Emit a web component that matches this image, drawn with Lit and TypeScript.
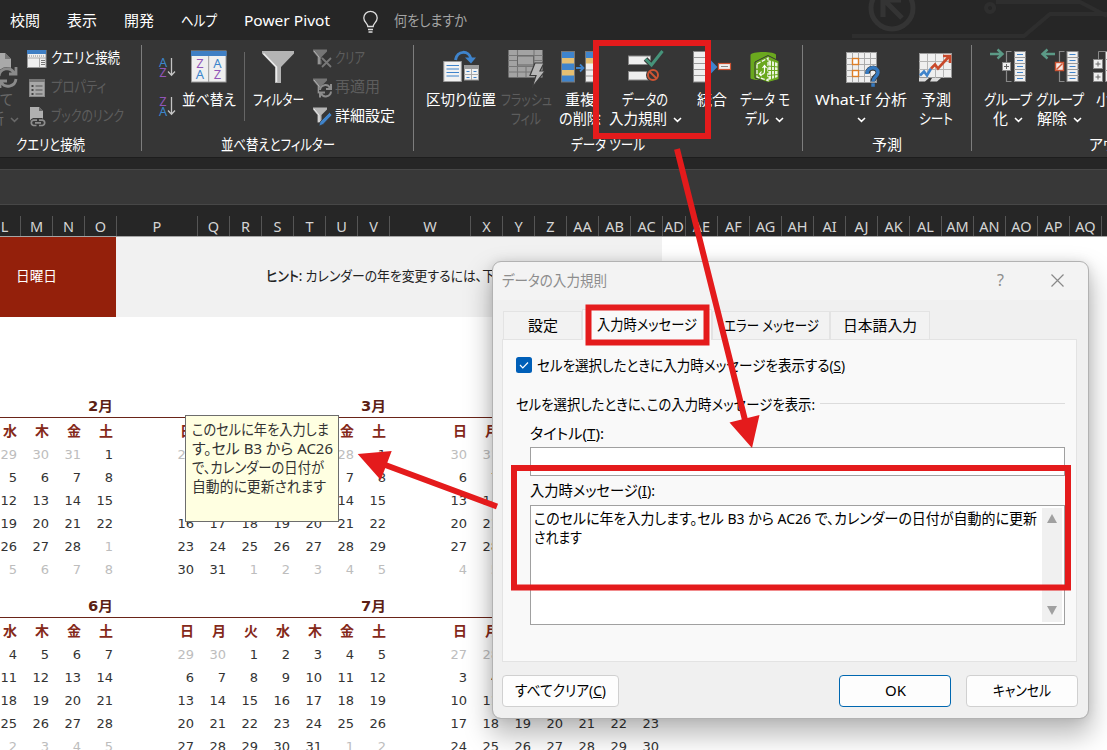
import { LitElement, html, svg, css } from "lit";
import { customElement, property, query } from "lit/decorators.js";

/** A single line of text condensed or widened to an exact width. */
@customElement("fit-text")
class FitText extends LitElement {
  @property({ type: Number }) w = 0;
  @query("span") span!: HTMLSpanElement;
  static styles = css`
    :host { display: inline-block; white-space: nowrap; text-align: left; }
    span { display: inline-block; transform-origin: 0 50%; }
  `;
  updated() {
    this.span.style.transform = "none";
    const natural = this.span.getBoundingClientRect().width;
    if (!natural || !this.w) return;
    this.style.width = `${this.w}px`;
    this.span.style.transform = `translateY(-1px) scaleX(${this.w / natural})`;
  }
  render() { return html`<span><slot></slot></span>`; }
}

const t = (text: unknown, w: number) => html`<fit-text .w=${w}>${text}</fit-text>`;
const chev = html`<svg class="chev" width="9" height="6" viewBox="0 0 9 6"><path d="M1 1l3.5 3.4L8 1" fill="none" stroke="currentColor" stroke-width="1.5"/></svg>`;
const i36 = (c: unknown) => html`<svg class="i36" width="36" height="36" viewBox="0 0 36 36">${c}</svg>`;
const i20 = (c: unknown) => html`<svg class="i20" width="20" height="20" viewBox="0 0 20 20">${c}</svg>`;

const sortIcon = (a: string, b: string, ca: string, cb: string) => html`
  <svg width="20" height="22" viewBox="0 0 20 22">
    <g font-family="Noto Sans" font-size="12.800" text-anchor="middle">
      <text x="5" y="10" fill=${ca}>${a}</text><text x="5" y="20" fill=${cb}>${b}</text></g>
    <path d="M13.500 1v17M10 14.500l3.500 3.700 3.500-3.700" fill="none" stroke="#c4c4c4" stroke-width="1.300"/>
  </svg>`;
const BLUE = "#3c86cc", PURPLE = "#9155b8";

const icons = {
  sort: i36(svg`<rect x="0.500" y="1" width="34.500" height="31" fill="#efefef" stroke="#9a9a9a"/>
    <rect x="0" y="1" width="35.500" height="5" fill="#3f7fc4"/><path d="M17.700 6v26" stroke="#999"/>
    <g font-family="Noto Sans" font-size="13" text-anchor="middle">
    <text x="9" y="17.500" fill=${PURPLE}>Z</text><text x="9" y="28.500" fill=${BLUE}>A</text>
    <text x="26.500" y="17.500" fill=${BLUE}>A</text><text x="26.500" y="28.500" fill=${PURPLE}>Z</text></g>`),
  filter: i36(svg`<path d="M2 1h32v2.500L21 17v16h-6V17L2 3.500z" fill="#b4b4b4"/>
    <path d="M3.500 3.500L16.500 17v15" fill="none" stroke="#ececec" stroke-width="1.500"/>`),
  split: i36(svg`<path d="M12.500 10C14 0 26 0 28 9" fill="none" stroke="#3f84cc" stroke-width="3"/>
    <path d="M22 7.500h11l-5 6z" fill="#3f84cc"/>
    <rect x="0.800" y="11.500" width="17.500" height="20" fill="#f2f2f2" stroke="#9a9a9a"/>
    <path d="M3.500 15.500h12.500M3.500 19h12.500M3.500 22.500h12.500M3.500 26h12.500" stroke="#3f84cc" stroke-width="1.200"/>
    <rect x="21.500" y="15.500" width="14" height="14.500" fill="#f2f2f2" stroke="#9a9a9a"/><rect x="21" y="15" width="15" height="4" fill="#9a9a9a"/>
    <path d="M28.500 19v11M21 24.500h15" stroke="#aaa"/><path d="M23.500 21.500h3M30.500 21.500h3M23.500 27.500h3M30.500 27.500h3" stroke="#3f84cc"/>`),
  flash: i36(svg`<rect x="0.500" y="0" width="34" height="27.500" fill="#a3a3a3"/>
    <path d="M0 5.500h35M0 10.500h35M0 16.500h35M0 22h35M9.500 0v5.500M9.500 10v17M26 0v17M18 16v11" stroke="#777" stroke-width="1.100"/>
    <rect x="9.500" y="6" width="16" height="9" fill="#a3a3a3" stroke="#666"/>
    <path d="M27 13h9l-4 8h5L24 37.500l4-12h-6z" fill="#b8b8b8" stroke="#3a3a3a" stroke-width="1.200"/>`),
  dup: i36(svg`<rect x="-0.500" y="1.500" width="13" height="30.500" fill="#3f84cc" stroke="#777"/>
    <rect x="0" y="8" width="12" height="5.500" fill="#e5bf72"/><rect x="0" y="20" width="12" height="5.500" fill="#e5bf72"/>
    <path d="M14 18h7M18 14.500l3.500 3.500-3.500 3.500" fill="none" stroke="#3f84cc" stroke-width="1.800"/>
    <rect x="23.500" y="1.500" width="12" height="30.500" fill="#efefef" stroke="#777"/>
    <rect x="24" y="2" width="12" height="6" fill="#3f84cc"/><rect x="24" y="8" width="12" height="5.500" fill="#e5bf72"/>
    <path d="M24 20h12M24 26h12" stroke="#999"/>`),
  valid: i36(svg`<rect x="1.500" y="6" width="22" height="8.500" fill="#efefef" stroke="#888"/>
    <rect x="1.500" y="21.500" width="22" height="8.500" fill="#efefef" stroke="#888"/>
    <path d="M18.500 9l6 6L35.500 1" fill="none" stroke="#363636" stroke-width="5"/>
    <path d="M18.500 9l6 6L35.500 1" fill="none" stroke="#46937a" stroke-width="3"/>
    <circle cx="26" cy="25" r="7" fill="#363636"/><circle cx="26" cy="25" r="5" fill="none" stroke="#cd5434" stroke-width="2"/><path d="M22.500 21.500l7 7" stroke="#cd5434" stroke-width="2"/>`),
  cons: i36(svg`<rect x="-0.500" y="1.500" width="14" height="30.500" fill="#efefef" stroke="#888"/>
    <path d="M0 7.500h13M0 13.500h13M0 19.500h13M0 25.500h13" stroke="#999"/>
    <path d="M14 17h5M18 13l4 4-4 4z" stroke="#3f84cc" stroke-width="2" fill="#3f84cc"/>
    <rect x="24.500" y="13.500" width="12" height="6" fill="#efefef" stroke="#cd5434" stroke-width="1.200"/><path d="M27 16.500h7" stroke="#888"/>`),
  model: i36(svg`<path d="M3.500 5C3.500 1 29 1 29 5V28C29 31 3.500 31 3.500 28z" fill="#6aa81e"/>
    <path d="M8 12l13-6.500L32 11v18.500L21 32.500 8 28z" fill="#6aa81e" stroke="#363636" stroke-width="1"/>
    <path d="M10 14l11-6v22.500L10 27z" fill="none" stroke="#f4f4f4" stroke-width="1.300" stroke-dasharray="4 1.500"/>
    <path d="M21.500 10l9 3v14l-9 3z" fill="#e9f3dc"/><path d="M24.500 10v21M27.500 11v19M21 16l10 1M21 20.500h10M21 25.500l10-1" stroke="#6aa81e"/>
    <path d="M13 24c4 1 4.500-1 4.500-3v-5M15.500 18l2-2.500 2 2.500M14.500 21.500L12.500 24l2 2" fill="none" stroke="#fff" stroke-width="1.200"/>`),
  whatif: i36(svg`<rect x="3.500" y="2.500" width="30" height="30" fill="#efefef" stroke="#999"/>
    <path d="M9.500 2v30M15.500 2v30M21.500 2v30M27.500 2v30M3 8.500h30M3 14.500h30M3 20.500h30M3 26.500h30" stroke="#aaa"/>
    <rect x="9.500" y="8.500" width="6" height="6" fill="#fff" stroke="#dd7e27" stroke-width="1.400"/><rect x="9.500" y="20.500" width="6" height="6" fill="#fff" stroke="#dd7e27" stroke-width="1.400"/>
    <path d="M24.500 23.500c0-7 10.500-7 10.500-1 0 4-5 4-5 9" fill="none" stroke="#363636" stroke-width="5"/>
    <path d="M24 24c0-8 11-8 11-1.500 0 4-5 4.500-5 9" fill="none" stroke="#3579bf" stroke-width="3.400"/><rect x="28.300" y="33.300" width="3.500" height="3.500" fill="#3579bf"/>`),
  forecast: i36(svg`<rect x="1.500" y="3.500" width="32" height="24" fill="#efefef" stroke="#999"/>
    <path d="M9.500 4v24M17.500 4v24M25.500 4v24M1 11.500h32M1 19.500h32" stroke="#b5b5b5"/>
    <path d="M1 28h10l-4 3.500H1zM14 28h9l-4 3.500h-7z" fill="#ddd"/>
    <path d="M2 25.500l4-4 3 4 4-7" fill="none" stroke="#3f84cc" stroke-width="2.600"/>
    <path d="M13 18.500l4-4 3 4L31.500 6M25 6h7v7" fill="none" stroke="#c9492b" stroke-width="2.600"/>`),
  group: i36(svg`<path d="M0 4h12M7.500-0.500l5 4.500-5 4.500" fill="none" stroke="#5b9a86" stroke-width="2.400"/>
    <path d="M21.500 1.500h-5v11M16.500 21v10.500h5" fill="none" stroke="#888" stroke-width="1.200"/>
    <rect x="12.500" y="12.500" width="8" height="8" fill="#efefef" stroke="#888"/><path d="M14 16.500h5M16.500 14v5" stroke="#666"/>
    <rect x="24.500" y="1.500" width="11" height="30" fill="#efefef" stroke="#888"/><path d="M24 7.500h12M24 13.500h12M24 19.500h12M24 25.500h12" stroke="#999"/>
    <path d="M27 4.500h6M27 10.500h6M27 16.500h6M27 22.500h6M27 28.500h6" stroke="#3f84cc" stroke-width="1.200"/>`),
  ungroup: i36(svg`<path d="M13 4H1M5.500-0.500L0.500 4l5 4.500" fill="none" stroke="#5b9a86" stroke-width="2.400"/>
    <path d="M22.500 1.500h-5v11M17.500 21v10.500h5" fill="none" stroke="#888" stroke-width="1.200"/>
    <rect x="13.500" y="12.500" width="8" height="8" fill="#f7e9e5" stroke="#cd5434" stroke-width="1.400"/><path d="M14.500 19.500l6-6" stroke="#cd5434" stroke-width="1.400"/>
    <rect x="25" y="1.500" width="11" height="30" fill="#efefef" stroke="#888"/><path d="M25 7.500h12M25 13.500h12M25 19.500h12M25 25.500h12" stroke="#999"/>
    <path d="M27.500 4.500h6M27.500 10.500h6M27.500 16.500h6M27.500 22.500h6M27.500 28.500h6" stroke="#3f84cc" stroke-width="1.200"/>`),
  subtotal: i36(svg`<path d="M12 1.500H5.500V9" fill="none" stroke="#888"/><rect x="0.500" y="9.500" width="9" height="9" fill="#efefef" stroke="#888"/>
    <rect x="0.500" y="22.500" width="9" height="9" fill="#efefef" stroke="#888"/><path d="M2.500 14h5M5 11.500v5M2.500 27h5M5 24.500v5" stroke="#666"/>
    <rect x="12.500" y="1.500" width="12" height="30" fill="#efefef" stroke="#888"/><path d="M12 9.500h12M12 20.500h12" stroke="#999"/>`),
};

const funnel = svg`<path d="M1 0.500h14v2L9.500 8v7.500h-4V8L1 2.500z" fill="#757575"/><path d="M2 2l5 6v7" fill="none" stroke="#b5b5b5"/>`;
const small = {
  query: i20(svg`<rect x="0.500" y="1.500" width="18.500" height="17" fill="#efefef" stroke="#9a9a9a"/><rect x="0" y="1" width="19" height="4" fill="#3f7fc4"/>
    <path d="M2 7h15" stroke="#888" stroke-dasharray="1 1"/><path d="M12.500 9v9M1 9h18" stroke="#aaa"/><path d="M14 11.500h4M14 13.500h4M14 15.500h4" stroke="#777"/>`),
  props: i20(svg`<rect x="2.500" y="1.500" width="15" height="17" fill="#a8a8a8" stroke="#8a8a8a"/><rect x="2" y="1" width="16" height="3" fill="#777"/>
    <path d="M8.500 8h7M8.500 12h7M8.500 16h7" stroke="#555"/><path d="M4.500 8h2M4.500 12h2M4.500 16h2" stroke="#444" stroke-width="2"/>`),
  link: i20(svg`<path d="M3 0h9l4 4v11H3z" fill="#b0b0b0"/><path d="M12 0v4h4z" fill="#666"/>
    <path d="M9 18.500H6.500a3 3 0 0 1 0-5.500H11M11 13h3.500a3 3 0 0 1 0 5.500H11M8.500 15.700h6" fill="none" stroke="#383838" stroke-width="4"/>
    <path d="M9.500 18.500H6.500a2.700 2.700 0 0 1 0-5.300H10M12 13.200h3.500a2.700 2.700 0 0 1 0 5.300H12M8 15.900h6" fill="none" stroke="#8d8d8d" stroke-width="1.700"/>`),
  clear: i20(svg`${funnel}<path d="M10 9l9 9M19 9l-9 9" stroke="#363636" stroke-width="4"/><path d="M10 9l9 9M19 9l-9 9" stroke="#787878" stroke-width="1.800"/>`),
  reapply: i20(svg`${funnel}<circle cx="13.500" cy="12.500" r="6.500" fill="#363636"/><path d="M8 12a5.300 5.300 0 0 1 10-2M19 6v5h-5M19 13.500a5.300 5.300 0 0 1-10 2M8 19.500v-5h5" fill="none" stroke="#8c8c8c" stroke-width="2"/>`),
  adv: i20(svg`<path d="M1 0.500h14v2L9.500 8v7.500h-4V8L1 2.500z" fill="#b5b5b5"/><path d="M2 2l5 6v7" fill="none" stroke="#eee"/><path d="M7 19l1-4L17.500 5.500l2.500 2.500L11 17.500z" fill="#3f84cc" stroke="#363636" stroke-width="0.700"/>`),
};

type Line = unknown;
const big = (w: number, icon: unknown, lines: Line[], off = false) => html`
  <div class="big ${off ? "off" : ""}" style="width:${w}px">${icon}${lines.map((l) => html`<div class="bl">${l}</div>`)}</div>`;
const row = (icon: unknown, text: string, w: number, off = false) => html`
  <div class="row ${off ? "off" : ""}">${icon}${t(text, w)}</div>`;

const COLS: [string, number][] = [
  ..."LMNO".split("").map((c) => [c, 32] as [string, number]), ["P", 81],
  ..."QRSTUV".split("").map((c) => [c, 32] as [string, number]), ["W", 81],
  ...["X", "Y", "Z", "AA", "AB", "AC"].map((c) => [c, 32] as [string, number]), ["AD", 23],
  ...["AE", "AF", "AG", "AH", "AI", "AJ", "AK", "AL", "AM", "AN", "AO", "AP", "AQ", ""].map((c) => [c, 32] as [string, number]),
];

// Each calendar row is 18 cells wide; a trailing "-" marks a day outside the month.
const parse = (s: string) => s.trim().split(/\s+/).map((c) => (c === "_" ? "" : c));
const TOP = [
  "29- 30- 31- 1 23- _ _ _ _ 28- 1 30- 31-",
  "5 6 7 8 _ _ _ _ _ 7 8 6 7",
  "12 13 14 15 _ _ _ _ _ 14 15 13 14",
  "19 20 21 22 16 17 18 19 20 21 22 20 21",
  "26 27 28 1- 23 24 25 26 27 28 29 27 28",
  "5- 6- 7- 8- 30 31 1- 2- 3- 4- 5- 4- 5-",
].map(parse);
const BOTTOM = [
  "4 5 6 7 29- 30- 1 2 3 4 5 27- 28-",
  "11 12 13 14 6 7 8 9 10 11 12 3 4",
  "18 19 20 21 13 14 15 16 17 18 19 10 11",
  "25 26 27 28 20 21 22 23 24 25 26 17 18 19 20 21 22 23",
  "2- 3- 4- 5- 27 28 29 30 31 1- 2- 24 25 26 27 28 29 30",
].map(parse);

@customElement("app-root")
class AppRoot extends LitElement {
  static styles = css`
    :host { display: block; position: relative; width: 1107px; height: 750px; overflow: hidden; background: #fff;
      font: 15px/19px "Noto Sans", "Noto Sans CJK JP", sans-serif; font-feature-settings: "palt"; color: #111; }
    * { box-sizing: border-box; }
    svg { display: block; flex: none; overflow: visible; }
    .tabs { height: 40px; background: #262626; color: #fff; display: flex; align-items: center; padding: 3px 0 0 10px; gap: 27px; position: relative; }
    .decor { position: absolute; left: 840px; top: 0; overflow: hidden; }
    .ask { display: flex; align-items: center; gap: 16px; color: #a3a3a3; margin-left: 6px; }
    .ribbon { height: 117px; background: #363636; color: #fff; display: flex; padding-top: 5px; overflow: hidden; }
    .group { flex: none; height: 106px; border-right: 1px solid #7d7d7d; }
    .g1 { width: 142px; } .g2 { width: 272px; } .g3 { width: 389px; } .g4 { width: 169px; } .g5 { width: 260px; border: 0; }
    .body { height: 90px; display: flex; }
    .g2 .body { padding-left: 12px; } .g3 .body { padding-left: 11px; } .g4 .body { padding-left: 8px; } .g5 .body { padding-left: 10px; }
    .label { height: 20px; line-height: 20px; text-align: center; }
    .g1 .label { padding-right: 40px; }
    .g5 .label { padding-left: 117px; text-align: left; }
    .big { flex: none; display: flex; flex-direction: column; align-items: center; padding-top: 5px; }
    .i36 { margin-bottom: 5px; }
    .bl { display: flex; align-items: center; gap: 6px; height: 19px; white-space: nowrap; }
    .off { color: #5d5d5d; }
    .rows { flex: none; margin-top: -1px; }
    .row { height: 29px; display: flex; align-items: center; gap: 4px; }
    .refresh { width: 27px; flex: none; padding-top: 5px; color: #686868; }
    .refresh .bl.all { margin-left: -26px; }
    .refresh .bl.new { margin-left: -26px; }
    .az { width: 26px; padding: 12px 0 0 4px; display: flex; flex-direction: column; gap: 17px; }
    .vline { width: 1px; height: 69px; margin: 7px 5px 0 6px; background: #666; }
    .g2 .rows { margin-left: 6px; }
    .g2 .row { gap: 3px; }
    .gap { height: 12px; background: #262626; border-top: 1px solid #1d1d1d; }
    .formula { height: 36px; background: #383838; border: solid #474747; border-width: 1px 0; }
    .cols { height: 32px; background: #262626; border-bottom: 1px solid #a5a5a5; display: flex; padding-top: 11px; color: #d5d5d5; overflow: hidden; }
    .col { flex: none; border-right: 1px solid #555; text-align: center; line-height: 20px; font-size: 14.500px; }
    .col:first-child { margin-left: -11px; }
    .banner { height: 80px; width: 662px; display: flex; align-items: center; background: #f1f1f1; font-size: 14px; color: #222; padding-bottom: 2px;
      background: linear-gradient(to right, #94200b 116px, #f1f1f1 116px); }
    .day { width: 116px; color: #fff; padding-left: 16px; display: flex; align-items: center; margin-right: 150px; }
    .banner b { font-weight: 500; }
    .cal { display: grid; grid-template: 21px 25px / 20px 32px 32px 32px 81px repeat(6, 32px) 81px repeat(6, 32px);
      width: 662px; grid-auto-rows: 23px; font: 13px/23px "DejaVu Sans", "Noto Sans CJK JP", sans-serif; color: #333; }
    .cal > * { padding-right: 3px; display: flex; justify-content: flex-end; white-space: nowrap; }
    .first { margin-top: 80px; } .second { margin-top: 16px; }
    .cal > .m { grid-row: 1; height: 21px; border-bottom: 1px solid #6a2418; font-weight: 700; font-size: 13.500px; color: #5c1f15; line-height: 21px; }
    .cal > .wd { font-weight: 700; font-size: 14px; color: #85291a; line-height: 27px; font-feature-settings: normal; }
    .o { color: #bdbdbd; }
    .tip { position: absolute; left: 185px; top: 415px; width: 154px; height: 107px; background: #ffffe1; border: 1px solid #6d6d6d; padding: 5px 7px 5px 6px; color: #333; display: flex; flex-direction: column; align-items: flex-start; }
    .dialog { position: absolute; left: 493px; top: 262px; width: 595px; height: 456px; border-radius: 8px; background: #f0f0f0;
      outline: 1px solid #b2b2b2; box-shadow: 0 14px 26px 4px rgba(0,0,0,.26), 0 0 12px rgba(0,0,0,.12); color: #000; display: flex; flex-direction: column; }
    .title { height: 38px; background: #f3f3f3; border-radius: 8px 8px 0 0; display: flex; align-items: center; padding: 0 24px 0 9px; color: #8d8d8d; }
    .q { margin-left: auto; margin-right: 47px; font-size: 16px; padding-bottom: 2px; }
    .x { margin-bottom: 2px; }
    .tabrow { height: 40px; display: flex; align-items: flex-end; padding-left: 10px; }
    .tab { height: 29px; border: 1px solid #e3e3e3; border-bottom: 0; background: #f2f2f2; display: flex; align-items: center; justify-content: center; }
    .tab.sel { height: 31px; background: #f9f9f9; position: relative; }
    .panel { margin: -1px 11px 0 9px; height: 323px; background: #f9f9f9; border: 1px solid #e3e3e3; padding: 16px 11px 0 27px; }
    .check { display: flex; align-items: center; gap: 5px; margin-left: -14px; height: 20px; }
    .check svg { margin-bottom: 3px; }
    .legend { display: flex; align-items: center; gap: 5px; margin: 19px 0 0 -14px; height: 20px; }
    .legend i { flex: 1; height: 1px; background: #dcdcdc; margin-bottom: 3px; }
    .fl { height: 20px; margin-top: 10px; display: flex; }
    .input { height: 29px; background: #fff; border: 1px solid #a0a0a0; margin-top: 2px; }
    .fl.msg { margin-top: 6px; }
    .area { height: 120px; background: #fff; border: 1px solid #a0a0a0; margin-top: 3px; display: flex; justify-content: space-between; padding: 2px 2px 2px 3px; }
    .lines { padding-top: 2px; display: flex; flex-direction: column; align-items: flex-start; }
    .sb { width: 20px; background: #f0f0f0; display: flex; flex-direction: column; justify-content: space-between; align-items: center; padding: 6px 0 7px; }
    .btns { display: flex; margin: 13px 10px 0 9px; }
    .btn { height: 32px; background: #fdfdfd; border: 1px solid #d0d0d0; border-radius: 4px; display: flex; align-items: center; justify-content: center; width: 112px; }
    .btn.clear { width: 117px; margin-right: auto; }
    .btn.ok { border-color: #0067b0; margin-right: 15px; }
    .notes { position: absolute; left: 0; top: 0; z-index: 2; }
  `;

  calendar(cls: string, names: string[], rows: string[][]) {
    const wd = ["水", "木", "金", "土", "日", "月", "火", "水", "木", "金", "土", "日", "月"];
    const skip = cls === "first" ? [5, 6, 7, 8] : [];
    return html`<div class="cal ${cls}">
      ${Array.from({ length: 18 }, (_, i) => html`<div class="m">${i === 3 ? t(names[0], 25) : i === 10 ? t(names[1], 25) : ""}</div>`)}
      ${Array.from({ length: 18 }, (_, i) => html`<div class="wd">${skip.includes(i) ? "" : wd[i] ?? ""}</div>`)}
      ${rows.map((r) => Array.from({ length: 18 }, (_, i) => {
        const v = r[i] ?? "";
        return html`<div class=${v.endsWith("-") ? "o" : ""}>${v.replace("-", "")}</div>`;
      }))}
    </div>`;
  }

  render() {
    return html`
      <div class="tabs">
        <svg class="decor" width="267" height="40" viewBox="0 0 267 40" fill="none" stroke="#343434" stroke-width="5">
          <circle cx="52" cy="8" r="21"/><path d="M62 18L44 0M43 17V0h18"/>
          <path d="M12 36h172l26-22h57M150 4a4 4 0 1 0 .1 0M156 2h84l27 14" stroke-width="4" stroke="#2e2e2e"/></svg>
        ${t("校閲", 30)}${t("表示", 30)}${t("開発", 30)}${t("ヘルプ", 36)}${t("Power Pivot", 86)}
        <div class="ask"><svg width="15" height="22" viewBox="0 0 15 22" fill="none" stroke="#ddd" stroke-width="1.300"><path d="M4.800 15.500c0-3-4-4.500-4-8.500a6.700 6.700 0 0 1 13.400 0c0 4-4 5.500-4 8.500zM5 18.500h5M5.500 21h4"/></svg>
        ${t("何をしますか", 73)}</div>
      </div>
      <div class="ribbon">
        <div class="group g1"><div class="body">
          <div class="refresh">
            <svg class="i36" width="17" height="36" viewBox="0 0 17 36"><path d="M-4 3H5l6 6v12H-4z" fill="#a9a9a9"/><path d="M5 3v6h6z" fill="#777"/><circle cx="7" cy="27" r="10" fill="#363636"/>
            <path d="M-1 26a8 8 0 0 1 15-3M16 17v7H9M16 29a8 8 0 0 1-15 3M0 38v-7h7" fill="none" stroke="#8a8a8a" stroke-width="2.800"/></svg>
            <div class="bl all">${t("すべて", 39)}</div><div class="bl new">${t("更新", 30)}${chev}</div>
          </div>
          <div class="rows">${row(small.query, "クエリと接続", 69)}${row(small.props, "プロパティ", 55, true)}${row(small.link, "ブックのリンク", 73, true)}</div>
        </div><div class="label">${t("クエリと接続", 69)}</div></div>
        <div class="group g2"><div class="body">
          <div class="az">${sortIcon("A", "Z", BLUE, PURPLE)}${sortIcon("Z", "A", PURPLE, BLUE)}</div>
          ${big(58, icons.sort, [t("並べ替え", 54)])}<div class="vline"></div>
          ${big(56, icons.filter, [t("フィルター", 51)])}
          <div class="rows">${row(small.clear, "クリア", 30, true)}${row(small.reapply, "再適用", 45, true)}${row(small.adv, "詳細設定", 60)}</div>
        </div><div class="label">${t("並べ替えとフィルター", 114)}</div></div>
        <div class="group g3"><div class="body">
          ${big(72, icons.split, [t("区切り位置", 70)])}
          ${big(58, icons.flash, [t("フラッシュ", 51), t("フィル", 30)], true)}
          ${big(50, icons.dup, [t("重複", 30), t("の削除", 42)])}
          ${big(80, icons.valid, [t("データの", 46), html`${t("入力規則", 58)}${chev}`])}
          ${big(54, icons.cons, [t("統合", 30)])}
          ${big(51, icons.model, [t("データ モ", 50), html`${t("デル", 24)}${chev}`])}
        </div><div class="label">${t("データ ツール", 74)}</div></div>
        <div class="group g4"><div class="body">
          ${big(100, icons.whatif, [t("What-If 分析", 92), chev])}
          ${big(50, icons.forecast, [t("予測", 30), t("シート", 34)])}
        </div><div class="label">${t("予測", 30)}</div></div>
        <div class="group g5"><div class="body">
          ${big(52, icons.group, [t("グループ", 48), html`${t("化", 15)}${chev}`])}
          ${big(51, icons.ungroup, [t("グループ", 48), html`${t("解除", 30)}${chev}`])}
          ${big(52, icons.subtotal, [t("小計", 30)])}
        </div><div class="label">${t("アウトライン", 78)}</div></div>
      </div>
      <div class="gap"></div><div class="formula"></div>
      <div class="cols">${COLS.map(([n, w]) => html`<div class="col" style="width:${w}px">${n}</div>`)}</div>
      <div class="banner"><div class="day">${t("日曜日", 41)}</div>${t(html`<b>ヒント:</b> カレンダーの年を変更するには、下`, 229)}</div>
      ${this.calendar("first", ["2月", "3月"], TOP)}
      ${this.calendar("second", ["6月", "7月"], BOTTOM)}
      <div class="tip">${t("このセルに年を入力しま", 137)}${t("す。セル B3 から AC26", 141)}${t("で、カレンダーの日付が", 132)}${t("自動的に更新されます", 134)}</div>
      <div class="dialog">
        <div class="title">${t("データの入力規則", 105)}<span class="q">?</span>
          <svg class="x" width="13" height="13" viewBox="0 0 13 13"><path d="M.5.5l12 12M12.500.5l-12 12" stroke="#888" stroke-width="1.200"/></svg></div>
        <div class="tabrow">
          <div class="tab" style="width:79px">${t("設定", 30)}</div><div class="tab sel" style="width:130px">${t("入力時メッセージ", 100)}</div>
          <div class="tab" style="width:118px">${t("エラー メッセージ", 95)}</div><div class="tab" style="width:100px">${t("日本語入力", 74)}</div>
        </div>
        <div class="panel">
          <div class="check"><svg width="16" height="16" viewBox="0 0 16 16"><rect width="16" height="16" rx="2.500" fill="#005fb8"/><path d="M4 8l2.800 2.800L12 5.500" fill="none" stroke="#fff" stroke-width="1.200"/></svg>
            ${t(html`セルを選択したときに入力時メッセージを表示する(<u>S</u>)`, 308)}</div>
          <div class="legend">${t("セルを選択したときに、この入力時メッセージを表示:", 299)}<i></i></div>
          <div class="fl">${t(html`タイトル(<u>T</u>):`, 74)}</div><div class="input"></div>
          <div class="fl msg">${t(html`入力時メッセージ(<u>I</u>):`, 125)}</div>
          <div class="area"><div class="lines">${t("このセルに年を入力します。セル B3 から AC26 で、カレンダーの日付が自動的に更新", 503)}${t("されます", 48)}</div>
            <div class="sb"><svg width="10" height="9"><path d="M5 0l5 9H0z" fill="#a0a0a0"/></svg><svg width="10" height="9"><path d="M5 9l5-9H0z" fill="#a0a0a0"/></svg></div></div>
        </div>
        <div class="btns"><div class="btn clear">${t(html`すべてクリア(<u>C</u>)`, 91)}</div><div class="btn ok">${t("OK", 21)}</div><div class="btn">${t("キャンセル", 58)}</div></div>
      </div>
      <svg class="notes" width="1107" height="750" fill="none" stroke="#e41b1c" stroke-width="6">
        <rect x="596" y="43" width="112" height="93"/><rect x="588.500" y="307.500" width="118" height="35"/><rect x="514" y="468" width="554" height="119.500"/>
        <path d="M677 149L745 420M497 506.500L384 464.500"/>
        <path d="M752 448l-22.500-25.500L759.500 415zM357.700 454l34-3-11 29z" fill="#e41b1c" stroke="none"/>
      </svg>`;
  }
}
